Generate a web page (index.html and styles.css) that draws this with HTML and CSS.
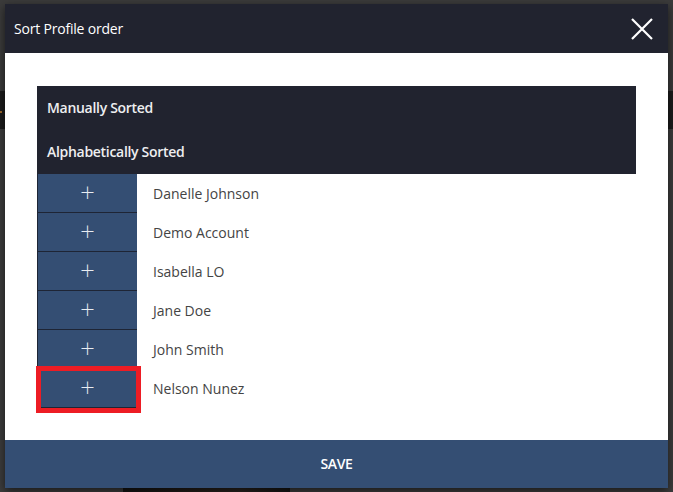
FILE: index.html
```html
<!DOCTYPE html>
<html lang="en">
<head>
<meta charset="utf-8">
<title>Sort Profile order</title>
<link rel="stylesheet" href="styles.css">
</head>
<body>
<div class="page">
  <div class="page-top"></div>
  <div class="page-nav"><span class="nav-dot"></span></div>
  <div class="page-main">
    <div class="photo"></div>
  </div>
</div>

<div class="modal" role="dialog" aria-labelledby="modal-title">
  <header class="modal-header">
    <h2 id="modal-title" class="modal-title">Sort Profile order</h2>
    <button class="modal-close" aria-label="Close">
      <svg width="24" height="24" viewBox="0 0 24 24" aria-hidden="true">
        <path d="M2 2 L22 22 M22 2 L2 22" stroke="#fff" stroke-width="2.2" fill="none"/>
      </svg>
    </button>
  </header>

  <div class="modal-body">
    <ul class="sort-modes">
      <li class="sort-mode">Manually Sorted</li>
      <li class="sort-mode">Alphabetically Sorted</li>
    </ul>
    <ul class="profile-list">
      <li class="profile-row"><button class="add-btn" aria-label="Add">+</button><span class="profile-name">Danelle Johnson</span></li>
      <li class="profile-row"><button class="add-btn" aria-label="Add">+</button><span class="profile-name">Demo Account</span></li>
      <li class="profile-row"><button class="add-btn" aria-label="Add">+</button><span class="profile-name">Isabella LO</span></li>
      <li class="profile-row"><button class="add-btn" aria-label="Add">+</button><span class="profile-name">Jane Doe</span></li>
      <li class="profile-row"><button class="add-btn" aria-label="Add">+</button><span class="profile-name">John Smith</span></li>
      <li class="profile-row"><button class="add-btn is-marked" aria-label="Add">+</button><span class="profile-name">Nelson Nunez</span></li>
    </ul>
  </div>

  <footer class="modal-footer">
    <button class="save-btn">SAVE</button>
  </footer>
</div>
</body>
</html>
```

FILE: styles.css
```css
* {
  box-sizing: border-box;
}

html,
body {
  margin: 0;
  padding: 0;
  height: 100%;
  overflow: hidden;
}

body {
  background: #3a3a3a;
  font-family: "Open Sans", "Liberation Sans", sans-serif;
}

/* dimmed page behind the dialog */
.page {
  display: flex;
  flex-direction: column;
  height: 100%;
}

.page-top {
  height: 91px;
  background: #3b3b3b;
}

.page-nav {
  height: 38px;
  background: #1c1c1c;
  display: flex;
  align-items: center;
}

.nav-dot {
  width: 2px;
  height: 2px;
  background: #a06a2a;
  margin-top: 4px;
}

.page-main {
  flex: 1;
  background: #3d3d3d;
  display: flex;
  align-items: flex-end;
  padding-left: 123px;
}

.photo {
  width: 167px;
  height: 8px;
  background: linear-gradient(90deg, #141414 0%, #241e1a 40%, #2a2420 70%, #161616 100%);
}

/* dialog */
.modal {
  position: absolute;
  left: 5px;
  top: 4px;
  width: 663px;
  height: 484px;
  display: flex;
  flex-direction: column;
  background: #fff;
  box-shadow: 0 3px 9px rgba(0, 0, 0, 0.6);
}

.modal-header {
  height: 49px;
  background: #21232f;
  display: flex;
  align-items: center;
  justify-content: space-between;
  padding: 0 14px 0 9px;
}

.modal-title {
  margin: 0;
  font-size: 14px;
  font-weight: 400;
  color: #fff;
  letter-spacing: -0.2px;
}

.modal-close {
  border: 0;
  background: none;
  padding: 0;
  width: 24px;
  height: 24px;
  display: flex;
  cursor: pointer;
}

.modal-body {
  flex: 1;
  padding: 33px 32px 0 32px;
}

.sort-modes {
  list-style: none;
  margin: 0;
  padding: 0;
  background: #21232f;
}

.sort-mode {
  height: 44px;
  display: flex;
  align-items: center;
  padding: 0 0 2px 10px;
  font-size: 14px;
  font-weight: 600;
  color: #eeeef0;
  letter-spacing: -0.3px;
}

.profile-list {
  list-style: none;
  margin: 0;
  padding: 0;
}

.profile-row {
  height: 39px;
  display: flex;
  align-items: center;
}

.add-btn {
  position: relative;
  width: 100px;
  height: 39px;
  flex: none;
  border: 0;
  border-left: 1px solid #1e2535;
  border-bottom: 1px solid #1e2535;
  background: #344e73;
  color: #e8ecf2;
  font-family: "DejaVu Sans", sans-serif;
  font-size: 19px;
  font-weight: 300;
  line-height: 1;
  padding: 0 0 2px;
  cursor: pointer;
}

/* callout frame drawn over the last button */
.add-btn.is-marked::after {
  content: "";
  position: absolute;
  left: -2px;
  top: -3px;
  right: -4px;
  bottom: -6px;
  border: 5px solid #ed1c24;
}

.profile-name {
  padding-left: 16px;
  font-size: 14px;
  color: #444;
}

.modal-footer {
  height: 48px;
  background: #344e73;
  display: flex;
}

.save-btn {
  flex: 1;
  border: 0;
  background: none;
  color: #fff;
  font-family: "Open Sans", "Liberation Sans", sans-serif;
  font-size: 14px;
  font-weight: 600;
  letter-spacing: -0.4px;
  padding: 0 0 2px;
  cursor: pointer;
}
```
